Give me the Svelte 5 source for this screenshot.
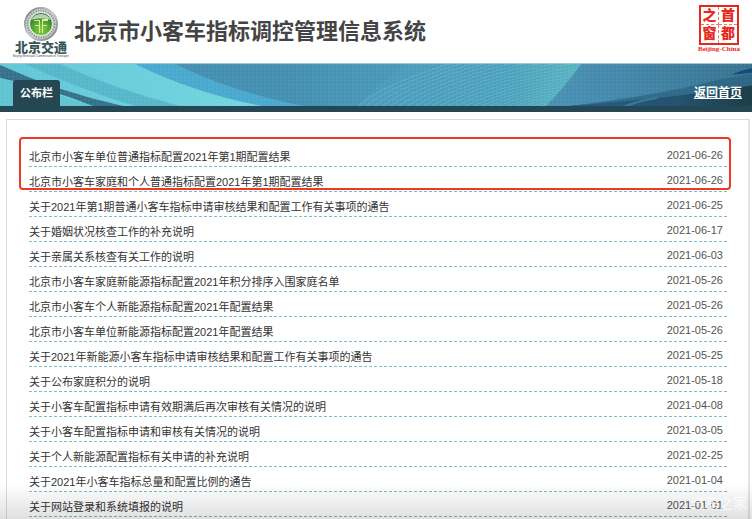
<script>
  // Notices shown on the board, newest first
  const notices = [
    { title: "北京市小客车单位普通指标配置2021年第1期配置结果", date: "2021-06-26" },
    { title: "北京市小客车家庭和个人普通指标配置2021年第1期配置结果", date: "2021-06-26" },
    { title: "关于2021年第1期普通小客车指标申请审核结果和配置工作有关事项的通告", date: "2021-06-25" },
    { title: "关于婚姻状况核查工作的补充说明", date: "2021-06-17" },
    { title: "关于亲属关系核查有关工作的说明", date: "2021-06-03" },
    { title: "北京市小客车家庭新能源指标配置2021年积分排序入围家庭名单", date: "2021-05-26" },
    { title: "北京市小客车个人新能源指标配置2021年配置结果", date: "2021-05-26" },
    { title: "北京市小客车单位新能源指标配置2021年配置结果", date: "2021-05-26" },
    { title: "关于2021年新能源小客车指标申请审核结果和配置工作有关事项的通告", date: "2021-05-25" },
    { title: "关于公布家庭积分的说明", date: "2021-05-18" },
    { title: "关于小客车配置指标申请有效期满后再次审核有关情况的说明", date: "2021-04-08" },
    { title: "关于小客车配置指标申请和审核有关情况的说明", date: "2021-03-05" },
    { title: "关于个人新能源配置指标有关申请的补充说明", date: "2021-02-25" },
    { title: "关于2021年小客车指标总量和配置比例的通告", date: "2021-01-04" },
    { title: "关于网站登录和系统填报的说明", date: "2021-01-01" }
  ];

  // Curves that fan out across the middle of the banner
  const fan = Array.from({ length: 24 }, (_, i) => i);
</script>

<div class="page">
  <header>
    <svg class="logo" viewBox="0 0 56 56" role="img" aria-label="北京交通">
      <defs>
        <linearGradient id="ring" x1="0" y1="0" x2="1" y2="1">
          <stop offset="0" stop-color="#707d7c" />
          <stop offset="0.5" stop-color="#c9cfce" />
          <stop offset="1" stop-color="#6d7877" />
        </linearGradient>
        <radialGradient id="green" cx="0.5" cy="0.75" r="0.7">
          <stop offset="0" stop-color="#8ed03c" />
          <stop offset="0.55" stop-color="#4fa52f" />
          <stop offset="1" stop-color="#286b35" />
        </radialGradient>
      </defs>
      <circle cx="28" cy="22" r="16" fill="#d9dddc" stroke="url(#ring)" stroke-width="2" />
      <circle cx="28" cy="22" r="13.5" fill="none" stroke="#8b9694" stroke-width="2" stroke-dasharray="1.5 1" />
      <circle cx="28" cy="22" r="11.5" fill="url(#green)" stroke="#eef1ee" stroke-width="1" />
      <path d="M18 18c4-8 16-8 20 0c-6-2-14-2-20 0z" fill="#e2ecdc" opacity="0.75" />
      <path d="M21 18h6v13h-1v-7h-4v-1h4v-4h-5zM29 17h6v2h-5v4h4v1h-4v7h-1z" fill="#d8f09c" />
      <text class="logo-name" x="28" y="50" text-anchor="middle">北京交通</text>
      <text class="logo-sub" x="28" y="55" text-anchor="middle">Beijing Municipal Commission of Transport</text>
    </svg>
    <h1>北京市小客车指标调控管理信息系统</h1>
    <a class="capital" href="#capital">
      <span class="seal">
        <span>之</span><span>首</span>
        <span>窗</span><span>都</span>
      </span>
      <span class="seal-name">Beijing-China</span>
    </a>
  </header>

  <nav>
    <svg class="waves" viewBox="0 0 752 43" preserveAspectRatio="none" aria-hidden="true">
      <defs>
        <linearGradient id="sea" x1="0" x2="1">
          <stop offset="0" stop-color="#62c6d6" />
          <stop offset="0.35" stop-color="#74d6e0" />
        </linearGradient>
        <linearGradient id="deep" x1="0" x2="1">
          <stop offset="0.2" stop-color="#458fb3" />
          <stop offset="0.5" stop-color="#4f9dbe" />
          <stop offset="0.75" stop-color="#4589ac" />
          <stop offset="1" stop-color="#38728f" />
        </linearGradient>
        <linearGradient id="net" x1="0" x2="1">
          <stop offset="0" stop-color="#4c9bbd" />
          <stop offset="0.7" stop-color="#4c9fbb" />
          <stop offset="1" stop-color="#58b3c0" />
        </linearGradient>
        <linearGradient id="shade" x1="0" x2="1">
          <stop offset="0" stop-color="#255d88" />
          <stop offset="0.6" stop-color="#25526d" />
          <stop offset="1" stop-color="#1c3e4b" />
        </linearGradient>
        <pattern id="dots" width="4" height="4" patternUnits="userSpaceOnUse">
          <rect width="2" height="2" fill="#b4ecf4" opacity="0.09" />
        </pattern>
        <clipPath id="netArea">
          <path d="M357 43Q382 16 410 0H581Q566 22 546 43z" />
        </clipPath>
      </defs>
      <rect width="752" height="43" fill="url(#sea)" />
      <path d="M0 14Q50 30 92 43H0z" fill="#5fc4cf" />
      <path d="M25 0H60Q115 26 180 43H135Q75 24 25 0z" fill="#57b6ca" />
      <path d="M0 1Q60 29 123 43H93Q50 25 0 14z" fill="#36718a" />
      <path d="M135 0H200L310 43H262Q195 30 135 0z" fill="#4ba8cf" />
      <path d="M175 0H752V43H304Q235 30 175 0z" fill="url(#deep)" />
      <path d="M357 43Q382 16 410 0H581Q566 22 546 43z" fill="url(#net)" />
      <g clip-path="url(#netArea)" fill="none" stroke="#74c6d2" stroke-opacity="0.45">
        {#each fan as i}
          <path d="M{355 + i * 8} 46Q{395 + i * 9} {4 + i} 620 {-44 + i * 4}" />
        {/each}
      </g>
      <rect width="752" height="43" fill="url(#dots)" />
      <path d="M570 43Q660 32 715 17L752 10V43z" fill="#29637f" opacity="0.7" />
      <path d="M568 43Q665 36 752 22V43z" fill="url(#shade)" />
      <path d="M622 43Q640 36 660 33L656 36Q640 38 630 43z" fill="#38799b" />
      <path d="M731 11Q742 6 752 4V9z" fill="#1c4a78" />
    </svg>
    <a class="tab" href="#board">公布栏</a>
    <a class="home" href="#home">返回首页</a>
  </nav>

  <main>
    <ul>
      {#each notices as notice}
        <li>
          <a href="#notice">{notice.title}</a>
          <time datetime={notice.date}>{notice.date}</time>
        </li>
      {/each}
    </ul>
  </main>

  <div class="fade"><span>汽车之家</span></div>
</div>

<style>
  :global(body) {
    margin: 0;
    background: #fff;
  }

  .page {
    position: relative;
    height: 100vh;
    overflow: hidden;
    font-family: "Liberation Sans", "Noto Sans CJK SC", sans-serif;
    font-size: 11px;
    color: #333;
  }

  a {
    color: inherit;
    text-decoration: none;
  }

  header {
    display: flex;
    align-items: center;
    height: 64px;
    padding: 0 12px 0 13px;
    border-bottom: 1px solid #a9c4d0;
    box-sizing: border-box;
  }

  .logo {
    width: 56px;
    height: 56px;
    margin-bottom: 4px;
  }

  .logo-name {
    font-size: 13px;
    font-weight: 900;
    fill: #3a5557;
  }

  .logo-sub {
    font-size: 3px;
    fill: #3a5557;
  }

  h1 {
    flex: 1;
    margin: 0 0 0 5px;
    font-size: 22px;
    font-weight: bold;
    line-height: 32px;
    color: #444;
    white-space: nowrap;
  }

  .capital {
    display: flex;
    flex-direction: column;
    align-items: center;
    margin-bottom: 6px;
    color: #e8281c;
  }

  .seal {
    display: grid;
    grid-template-columns: 1fr 1fr;
    width: 40px;
    height: 40px;
    box-sizing: border-box;
    border: 2px solid #e8281c;
    font-size: 14px;
    font-weight: 900;
    line-height: 17px;
    text-align: center;
  }

  .seal span:nth-child(odd) {
    border-right: 1px dashed #f0786f;
  }

  .seal span:nth-child(-n + 2) {
    border-bottom: 1px dashed #f0786f;
  }

  .seal-name {
    font-family: "Liberation Serif", serif;
    font-size: 7px;
    font-weight: bold;
    line-height: 8px;
  }

  nav {
    position: relative;
    display: flex;
    justify-content: space-between;
    align-items: flex-end;
    height: 42px;
    padding: 0 10px 0 13px;
    border-bottom: 6px solid #254754;
    color: #fff;
    font-weight: bold;
  }

  /* artwork behind the tab and the link */
  .waves {
    position: absolute;
    inset: 0;
    width: 100%;
    height: 100%;
  }

  .tab {
    position: relative;
    padding: 0 7px;
    border-radius: 3px 3px 0 0;
    background: #254754;
    line-height: 26px;
  }

  .home {
    position: relative;
    font-size: 12px;
    line-height: 26px;
    text-decoration: underline;
  }

  main {
    margin: 7px 2px 0 6px;
    padding: 22px 21px 24px 22px;
    border: 1px solid #dcdcdc;
    border-right: 2px solid #e4e4e4;
  }

  ul {
    position: relative;
    margin: 0;
    padding: 0;
    list-style: none;
  }

  /* red frame round the two latest results */
  ul::before {
    content: "";
    position: absolute;
    top: -5px;
    left: -10px;
    right: -4px;
    height: 53px;
    box-sizing: border-box;
    border: 2px solid #ee3a22;
    border-radius: 4px;
    pointer-events: none;
  }

  li {
    display: flex;
    justify-content: space-between;
    height: 25px;
    padding-right: 4px;
    box-sizing: border-box;
    border-bottom: 1px dashed #7fbccb;
    white-space: nowrap;
  }

  li a {
    line-height: 30px;
  }

  time {
    line-height: 26px;
    color: #555;
  }

  /* soft shade along the bottom edge of the window */
  .fade {
    position: absolute;
    left: 0;
    right: 0;
    bottom: 0;
    height: 36px;
    padding-right: 5px;
    box-sizing: border-box;
    background: linear-gradient(rgba(0, 0, 0, 0), rgba(0, 0, 0, 0.12));
    color: rgba(255, 255, 255, 0.75);
    font-size: 14px;
    line-height: 40px;
    text-align: right;
    pointer-events: none;
  }
</style>
